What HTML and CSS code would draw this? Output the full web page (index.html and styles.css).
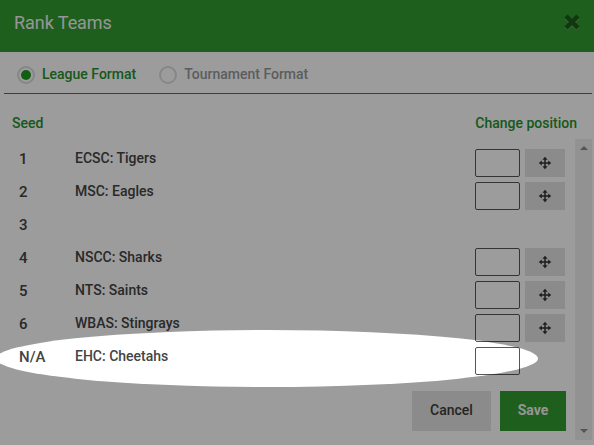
FILE: index.html
```html
<!DOCTYPE html>
<html lang="en">

<head>
    <meta charset="UTF-8">
    <meta name="viewport" content="width=device-width, initial-scale=1.0">
    <title>Rank Teams</title>
    <link rel="stylesheet" href="styles.css">
</head>

<body>
    <svg class="symbols">
        <symbol id="move" viewBox="0 0 14 14">
            <path d="M7 2v10M2 7h10" stroke="currentColor" stroke-width="1.5" />
            <path d="M7 .8l2.6 3H4.4zM7 13.2l2.6-3H4.4zM.8 7l3-2.6v5.2zM13.2 7l-3-2.6v5.2z" fill="currentColor" />
        </symbol>
    </svg>
    <div class="modal">
        <div class="header">
            <h1>Rank Teams</h1>
            <svg class="close" viewBox="0 0 20 20">
                <path class="close-glow" d="M4 5l12 12M16 5L4 17" />
                <path class="close-cross" d="M4 4l12 12M16 4L4 16" />
            </svg>
        </div>
        <div class="formats">
            <label class="format active"><span class="radio"></span>League Format</label>
            <label class="format"><span class="radio"></span>Tournament Format</label>
        </div>
        <div class="titles">
            <span>Seed</span>
            <span>Change position</span>
        </div>
        <div class="content">
            <div class="main">
                <div class="row">
                    <span class="seed">1</span><span class="team">ECSC: Tigers</span>
                    <input type="text"><button class="move"><svg><use href="#move" /></svg></button>
                </div>
                <div class="row">
                    <span class="seed">2</span><span class="team">MSC: Eagles</span>
                    <input type="text"><button class="move"><svg><use href="#move" /></svg></button>
                </div>
                <div class="row">
                    <span class="seed">3</span>
                </div>
                <div class="row">
                    <span class="seed">4</span><span class="team">NSCC: Sharks</span>
                    <input type="text"><button class="move"><svg><use href="#move" /></svg></button>
                </div>
                <div class="row">
                    <span class="seed">5</span><span class="team">NTS: Saints</span>
                    <input type="text"><button class="move"><svg><use href="#move" /></svg></button>
                </div>
                <div class="row">
                    <span class="seed">6</span><span class="team">WBAS: Stingrays</span>
                    <input type="text"><button class="move"><svg><use href="#move" /></svg></button>
                </div>
                <div class="row">
                    <span class="seed">N/A</span><span class="team">EHC: Cheetahs</span>
                    <input type="text">
                </div>
                <div class="buttons">
                    <button class="cancel">Cancel</button>
                    <button class="save">Save</button>
                </div>
            </div>
            <div class="scrollbar">
                <span class="up"></span>
                <span class="down"></span>
            </div>
        </div>
    </div>
    <div class="spotlight"></div>
</body>

</html>
```
FILE: styles.css
```css
* {
    box-sizing: border-box;
}

body {
    margin: 0;
    height: 445px;
    overflow: hidden;
    position: relative;
    background-color: #fff;
    color: #3c3c3c;
    font-family: Roboto, sans-serif;
    font-size: 14px;
    font-weight: 500;
}

.symbols {
    display: none;
}

.header {
    display: flex;
    justify-content: space-between;
    align-items: center;
    height: 52px;
    padding: 0 12px 8px 14px;
    background-color: #319c31;
}

h1 {
    margin: 0;
    color: #f4f4f4;
    font-size: 18px;
    font-weight: 400;
    letter-spacing: -0.05px;
}

.close {
    width: 20px;
    height: 20px;
    fill: none;
    stroke-width: 4.5;
}

.close-glow {
    stroke: #68ad68;
}

.close-cross {
    stroke: #1c5a1c;
}

.formats {
    display: flex;
    gap: 23px;
    height: 42px;
    margin: 0 2px 0 4px;
    padding: 13px 0 0 13px;
    border-bottom: 1px solid #268f30;
}

.format {
    display: flex;
    gap: 7px;
    height: 19px;
    line-height: 19px;
    color: #989898;
}

.format.active {
    color: #27902f;
}

.radio {
    width: 18px;
    height: 18px;
    margin-top: 1px;
    border: 2px solid #dcdcdc;
    border-radius: 50%;
}

.active .radio {
    padding: 2px;
    background: #1f9a1f content-box;
    background-clip: content-box;
}

.titles {
    display: flex;
    justify-content: space-between;
    height: 45px;
    padding: 20px 17px 0 12px;
    line-height: 18px;
    color: #27902f;
}

.content {
    display: flex;
    height: 301px;
}

.main {
    width: 575px;
    padding-top: 10px;
}

.row {
    display: flex;
    height: 33px;
    padding-left: 19px;
    color: #444;
}

.seed {
    width: 56px;
    font-size: 15px;
    line-height: 20px;
}

.team {
    width: 400px;
    line-height: 18px;
}

.row input {
    width: 45px;
    height: 28px;
    margin: 0;
    background: transparent;
    border: 1px solid #555;
    border-radius: 2px;
}

button {
    padding: 0;
    border: 0;
    font: inherit;
    color: inherit;
    background-color: #e3e3e3;
}

.move {
    display: flex;
    justify-content: center;
    align-items: center;
    width: 40px;
    height: 28px;
    margin-left: 5px;
    color: #333;
}

.move svg {
    width: 14px;
    height: 14px;
}

.buttons {
    display: flex;
    justify-content: flex-end;
    gap: 9px;
    padding: 11px 9px 0 0;
}

.buttons button {
    height: 40px;
    padding-bottom: 2px;
}

.cancel {
    width: 79px;
}

.buttons .save {
    width: 66px;
    color: #f4f4f4;
    font-weight: 700;
    background-color: #319c31;
}

.scrollbar {
    display: flex;
    flex-direction: column;
    justify-content: space-between;
    align-items: center;
    width: 17px;
    padding: 7px 0;
    background-color: #efefef;
}

.up,
.down {
    border: 4px solid transparent;
    border-top-width: 0;
    border-bottom-color: #8a8a8a;
}

.down {
    transform: rotate(180deg);
}

/* dims everything except the last row */
.spotlight {
    position: absolute;
    left: -4px;
    top: 330px;
    width: 542px;
    height: 57px;
    border-radius: 50%;
    box-shadow: 0 0 0 1000px rgba(0, 0, 0, 0.39);
    pointer-events: none;
}
```
